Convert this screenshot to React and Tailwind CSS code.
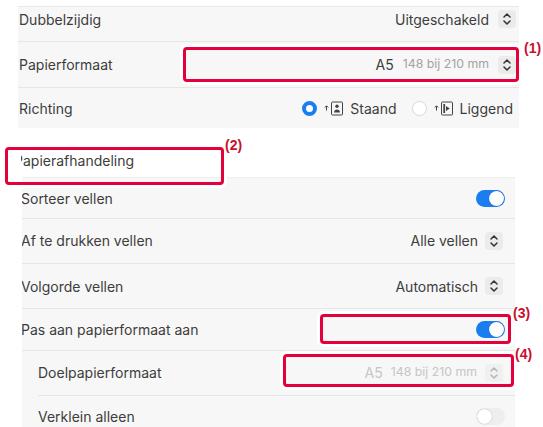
import React from "react";

const Stepper = ({ dim }) => (
  <span className={`flex h-[18px] w-[18px] items-center justify-center rounded-[4px] ${dim ? "bg-[#f0f0f0]" : "bg-[#ebebeb]"}`}>
    <svg width="10" height="14" viewBox="0 0 10 14" fill="none" stroke={dim ? "#b5b5b5" : "#333"} strokeWidth="1.5" strokeLinecap="round" strokeLinejoin="round">
      <path d="M2 5l3-3 3 3M2 9l3 3 3-3" />
    </svg>
  </span>
);

const Toggle = ({ on }) => (
  <span className={`flex h-[17px] w-[29px] items-center rounded-full ${on ? "justify-end bg-[#1a7df0]" : "justify-start bg-[#eeeeee]"}`}>
    <span className={`h-[15px] w-[15px] rounded-full bg-white ${on ? "mr-px" : "ml-px"} shadow-[0_0_1px_rgba(0,0,0,0.4)]`} />
  </span>
);

const Row = ({ h, label, children, indent, pad = "", right = "pr-[10px]", gap = "gap-[9px]", shift = "", line = true }) => (
  <div className={`flex items-center justify-between ${h} ${line ? "border-b border-[#e6e6e6]" : ""} ${indent ? "ml-[16px]" : ""} ${pad} ${right}`}>
    <span className={`text-[14px] text-[#3d3d3d] ${shift}`}>{label}</span>
    <div className={`flex items-center ${gap}`}>{children}</div>
  </div>
);

const Box = ({ className }) => (
  <div className={`absolute rounded-[4px] border-[3px] border-[#e4003a] shadow-[0_0_0_3px_#ffffff] ${className}`} />
);

const Num = ({ children, className }) => (
  <span className={`absolute font-['Liberation_Sans',sans-serif] text-[14px] font-bold leading-none text-[#c8102e] ${className}`}>{children}</span>
);

const Portrait = () => (
  <svg width="19" height="15" viewBox="0 0 19 15" fill="none" stroke="#444" strokeWidth="1">
    <path d="M2.5 9.5V5M.8 6.5l1.7-1.7 1.7 1.7" />
    <rect x="7.5" y="1" width="11" height="13" rx="1" />
    <circle cx="13" cy="5.3" r="1.7" fill="#444" stroke="none" />
    <path d="M10 11.5c0-2 1.5-3 3-3s3 1 3 3z" fill="#444" stroke="none" />
  </svg>
);

const Landscape = () => (
  <svg width="19" height="15" viewBox="0 0 19 15" fill="none" stroke="#444" strokeWidth="1">
    <path d="M2.5 9.5V5M.8 6.5l1.7-1.7 1.7 1.7" />
    <rect x="7.5" y="1" width="11" height="13" rx="1" />
    <path d="M10.2 3v9" strokeWidth="1.8" />
    <path d="M12 5l3.8 2.5-3.8 2.5z" fill="#444" stroke="none" />
  </svg>
);

export default function App() {
  return (
    <div className="relative h-[427px] w-[543px] overflow-hidden bg-white pt-[6px] font-['Inter','Liberation_Sans',sans-serif]">
      <div className="ml-[18px] w-[501px] border-t border-[#e8e8e8] bg-[#f7f7f7]">
        <Row h="h-[35px] pb-[10px]" label="Dubbelzijdig" right="pr-[3px]" pad="pl-px">
          <span className="text-[14px] text-[#3d3d3d]">Uitgeschakeld</span>
          <Stepper />
        </Row>
        <Row h="h-[46px]" label="Papierformaat" right="pr-[3px]" pad="pl-px">
          <span className="text-[14px] text-[#3d3d3d]">A5</span>
          <span className="text-[12.3px] text-[#a3a3a3]">148 bij 210 mm</span>
          <Stepper />
        </Row>
        <Row h="h-[40px]" label="Richting" right="pr-[6px]" pad="pl-px" gap="gap-[15px]" line={false}>
          <div className="flex items-center gap-[7px]">
            <span className="h-[15px] w-[15px] rounded-full border-[4px] border-[#1a7df0] bg-white" />
            <Portrait />
            <span className="text-[14px] text-[#3d3d3d]">Staand</span>
          </div>
          <div className="flex items-center gap-[7px]">
            <span className="h-[15px] w-[15px] rounded-full border border-[#d8d8d8] bg-white" />
            <Landscape />
            <span className="text-[14px] text-[#3d3d3d]">Liggend</span>
          </div>
        </Row>
      </div>

      <div className="mt-[23px] ml-[21px] h-[26px] overflow-hidden text-[14px] leading-[20px] text-[#3d3d3d]">
        <div className="-ml-[7px]">Papierafhandeling</div>
      </div>

      <div className="ml-[22px] w-[493px] overflow-hidden border-t border-[#efefef] bg-[#f7f7f7]">
        <Row h="h-[41px]" label="Sorteer vellen" shift="-ml-px"><Toggle on /></Row>
        <Row h="h-[45px] pb-px" label="Af te drukken vellen" shift="-ml-px" right="pr-[12px]" gap="gap-[7px]">
          <span className="text-[14px] text-[#3d3d3d]">Alle vellen</span>
          <Stepper />
        </Row>
        <Row h="h-[45px]" label="Volgorde vellen" shift="-ml-px" right="pr-[12px]" gap="gap-[7px]">
          <span className="text-[14px] text-[#3d3d3d]">Automatisch</span>
          <Stepper />
        </Row>
        <Row h="h-[42px]" label="Pas aan papierformaat aan" shift="-ml-px"><Toggle on /></Row>
        <Row h="h-[45px] pb-px" label="Doelpapierformaat" indent right="pr-[12px]" gap="gap-[8px]">
          <span className="text-[14px] text-[#c6c6c6]">A5</span>
          <span className="text-[12.3px] text-[#c6c6c6]">148 bij 210 mm</span>
          <Stepper dim />
        </Row>
        <Row h="h-[42px] pb-[2px]" label="Verklein alleen" indent line={false}><Toggle /></Row>
      </div>

      <Box className="left-[183px] top-[47px] h-[35px] w-[336px]" />
      <Box className="left-[5px] top-[147px] h-[38px] w-[219px]" />
      <Box className="left-[320px] top-[314px] h-[30px] w-[191px]" />
      <Box className="left-[283px] top-[354px] h-[33px] w-[231px]" />
      <Num className="left-[524px] top-[41px]">(1)</Num>
      <Num className="left-[225px] top-[138px]">(2)</Num>
      <Num className="left-[513px] top-[306px]">(3)</Num>
      <Num className="left-[515px] top-[347px]">(4)</Num>
    </div>
  );
}
